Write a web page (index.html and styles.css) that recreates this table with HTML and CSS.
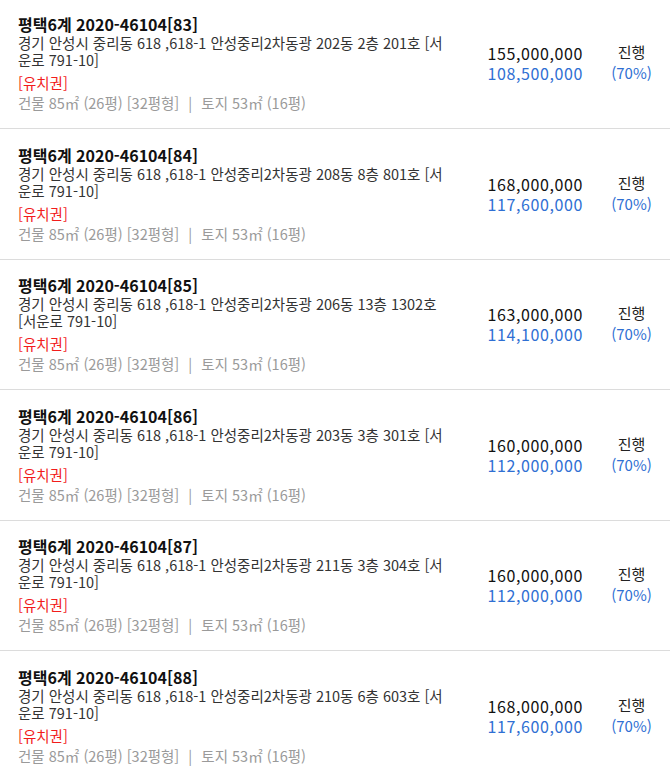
FILE: index.html
```html
<!DOCTYPE html>
<html lang="ko">
<head>
<meta charset="utf-8">
<link rel="stylesheet" href="styles.css">
</head>
<body>
<ul class="list">
  <li class="item">
    <div class="info">
      <div class="title">평택6계 2020-46104[83]</div>
      <div class="addr">경기 안성시 중리동 618 ,618-1 안성중리2차동광 202동 2층 201호 [서운로 791-10]</div>
      <div class="tag">[유치권]</div>
      <div class="area">건물 85㎡ (26평) [32평형] <span class="sep">|</span> 토지 53㎡ (16평)</div>
    </div>
    <div class="price"><div class="appraisal">155,000,000</div><div class="minimum">108,500,000</div></div>
    <div class="status"><div class="state">진행</div><div class="pct">(70%)</div></div>
  </li>
  <li class="item">
    <div class="info">
      <div class="title">평택6계 2020-46104[84]</div>
      <div class="addr">경기 안성시 중리동 618 ,618-1 안성중리2차동광 208동 8층 801호 [서운로 791-10]</div>
      <div class="tag">[유치권]</div>
      <div class="area">건물 85㎡ (26평) [32평형] <span class="sep">|</span> 토지 53㎡ (16평)</div>
    </div>
    <div class="price"><div class="appraisal">168,000,000</div><div class="minimum">117,600,000</div></div>
    <div class="status"><div class="state">진행</div><div class="pct">(70%)</div></div>
  </li>
  <li class="item">
    <div class="info">
      <div class="title">평택6계 2020-46104[85]</div>
      <div class="addr">경기 안성시 중리동 618 ,618-1 안성중리2차동광 206동 13층 1302호 [서운로 791-10]</div>
      <div class="tag">[유치권]</div>
      <div class="area">건물 85㎡ (26평) [32평형] <span class="sep">|</span> 토지 53㎡ (16평)</div>
    </div>
    <div class="price"><div class="appraisal">163,000,000</div><div class="minimum">114,100,000</div></div>
    <div class="status"><div class="state">진행</div><div class="pct">(70%)</div></div>
  </li>
  <li class="item">
    <div class="info">
      <div class="title">평택6계 2020-46104[86]</div>
      <div class="addr">경기 안성시 중리동 618 ,618-1 안성중리2차동광 203동 3층 301호 [서운로 791-10]</div>
      <div class="tag">[유치권]</div>
      <div class="area">건물 85㎡ (26평) [32평형] <span class="sep">|</span> 토지 53㎡ (16평)</div>
    </div>
    <div class="price"><div class="appraisal">160,000,000</div><div class="minimum">112,000,000</div></div>
    <div class="status"><div class="state">진행</div><div class="pct">(70%)</div></div>
  </li>
  <li class="item">
    <div class="info">
      <div class="title">평택6계 2020-46104[87]</div>
      <div class="addr">경기 안성시 중리동 618 ,618-1 안성중리2차동광 211동 3층 304호 [서운로 791-10]</div>
      <div class="tag">[유치권]</div>
      <div class="area">건물 85㎡ (26평) [32평형] <span class="sep">|</span> 토지 53㎡ (16평)</div>
    </div>
    <div class="price"><div class="appraisal">160,000,000</div><div class="minimum">112,000,000</div></div>
    <div class="status"><div class="state">진행</div><div class="pct">(70%)</div></div>
  </li>
  <li class="item">
    <div class="info">
      <div class="title">평택6계 2020-46104[88]</div>
      <div class="addr">경기 안성시 중리동 618 ,618-1 안성중리2차동광 210동 6층 603호 [서운로 791-10]</div>
      <div class="tag">[유치권]</div>
      <div class="area">건물 85㎡ (26평) [32평형] <span class="sep">|</span> 토지 53㎡ (16평)</div>
    </div>
    <div class="price"><div class="appraisal">168,000,000</div><div class="minimum">117,600,000</div></div>
    <div class="status"><div class="state">진행</div><div class="pct">(70%)</div></div>
  </li>
</ul>
</body>
</html>
```
FILE: styles.css
```css
html, body {
  margin: 0;
  padding: 0;
  background: #fff;
}
body {
  font-family: "Noto Sans CJK KR", "Noto Sans", sans-serif;
  color: #222;
}
.list {
  list-style: none;
  margin: -1.5px 0 0 0;
  padding: 0;
}
.item {
  display: flex;
  align-items: center;
  height: 129.5px;
  border-bottom: 1px solid #dcdcdc;
  box-sizing: content-box;
}
.info {
  width: 430px;
  padding-left: 18px;
  flex: none;
}
.title {
  font-size: 16px;
  font-weight: 700;
  line-height: 19px;
  color: #111;
}
.addr {
  font-size: 14.5px;
  line-height: 17px;
  color: #333;
}
.tag {
  font-size: 14.5px;
  line-height: 17px;
  color: #f21c1c;
  margin-top: 6px;
}
.area {
  font-size: 14.5px;
  line-height: 17px;
  color: #9a9a9a;
  margin-top: 3px;
}
.sep {
  margin: 0 5px;
}
.price {
  flex: 1;
  text-align: right;
  font-size: 16px;
  letter-spacing: 0.6px;
  line-height: 20px;
}
.appraisal {
  color: #111;
}
.minimum {
  color: #2f6fd3;
}
.status {
  width: 77px;
  margin-left: 10px;
  text-align: center;
}
.state {
  font-size: 15px;
  line-height: 20px;
  color: #222;
}
.pct {
  font-size: 15px;
  line-height: 22px;
  color: #2f6fd3;
}
```
